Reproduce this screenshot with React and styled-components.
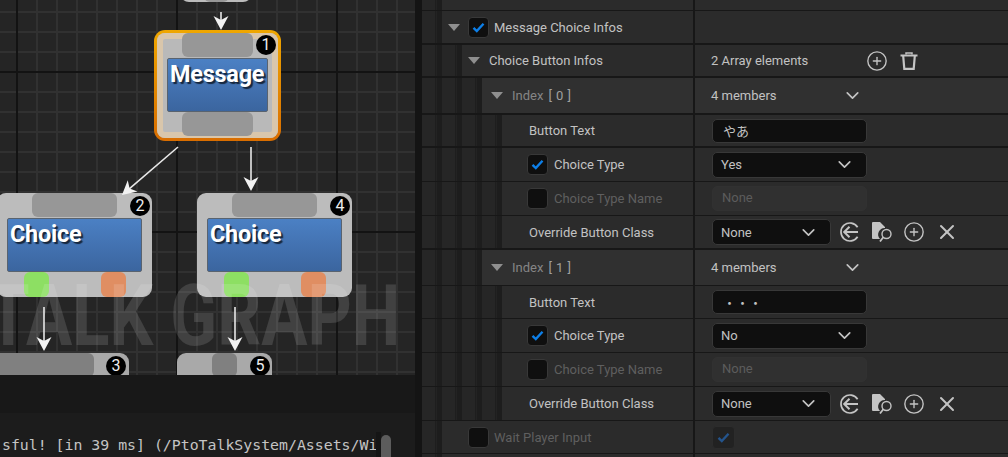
import React from 'react'
import styled, { createGlobalStyle } from 'styled-components'
import { ChevronDown, CirclePlus, X } from 'lucide-react'

const GlobalStyle = createGlobalStyle`
    html, body { margin: 0; padding: 0; background: #161616; overflow: hidden; }
    body { font-family: Roboto, "Noto Sans CJK JP", sans-serif; }
`

const Page = styled.div`
    display: flex;
    width: 1008px;
    height: 457px;
    overflow: hidden;
`

/* left side: graph + console */
const LeftColumn = styled.div`
    display: flex;
    flex-direction: column;
    width: 415px;
    flex: none;
`

const Canvas = styled.div`
    position: relative;
    height: 375px;
    flex: none;
    overflow: hidden;
    background-color: #252525;
    background-image:
        linear-gradient(to right, #131313 0 2px, transparent 2px),
        linear-gradient(to bottom, #131313 0 2px, transparent 2px),
        linear-gradient(to right, #313131 0 2px, transparent 2px),
        linear-gradient(to bottom, #313131 0 2px, transparent 2px);
    background-size: 160px 160px, 160px 160px, 20px 20px, 20px 20px;
    background-position: 16px 0, 0 71px, 16px 0, 0 11px;
`

const Node = styled.div`
    position: absolute;
    left: ${p => p.$x}px;
    top: ${p => p.$y}px;
    width: ${p => p.$w}px;
    height: ${p => p.$h}px;
    box-sizing: border-box;
    border-radius: 9px;
    background: ${p => p.$bg || '#bcbcbc'};
    display: flex;
    flex-direction: column;
    align-items: ${p => p.$align || 'center'};
    justify-content: ${p => p.$justify || 'flex-start'};
`

const SelectedNode = styled(Node)`
    padding: 3px;
    border-radius: 11px;
    background: linear-gradient(to bottom, #efa700, #d96d00);
`

const SelectedInner = styled.div`
    flex: 1;
    width: 100%;
    box-sizing: border-box;
    border-radius: 8px;
    background: #b9b9b9;
    box-shadow: inset 0 0 0 6px #d9c6ab;
    display: flex;
    flex-direction: column;
    align-items: center;
`

const Pin = styled.div`
    flex: none;
    width: ${p => p.$w}px;
    height: ${p => p.$h}px;
    margin-left: ${p => p.$ml || 0}px;
    border-radius: 6px;
    background: ${p => p.$color || '#979797'};
`

const BlueBox = styled.div`
    flex: none;
    width: ${p => p.$w}px;
    height: 54px;
    margin-top: 1px;
    box-sizing: border-box;
    border: 1px solid #59636f;
    border-radius: 2px;
    background: linear-gradient(to bottom, #4b80c4, #3b659f);
    padding: 0 0 0 2px;
    color: #fff;
    font-weight: 700;
    font-size: 23.4px;
    line-height: 30px;
    letter-spacing: -0.2px;
    text-shadow: 2px 2px 1px #16263c;
`

const PinRow = styled.div`
    flex: none;
    width: 102px;
    display: flex;
    justify-content: space-between;
`

const Badge = styled.div`
    position: absolute;
    top: ${p => p.$t}px;
    right: ${p => p.$r}px;
    width: 20px;
    height: 20px;
    border-radius: 50%;
    background: #000;
    color: #eee;
    font-size: 16px;
    line-height: 20px;
    text-align: center;
`

const Watermark = styled.div`
    position: absolute;
    left: -13px;
    top: 266px;
    font-weight: 700;
    font-size: 86px;
    line-height: 100px;
    white-space: nowrap;
    color: rgba(255, 255, 255, 0.13);
    transform: scaleX(0.8);
    transform-origin: left top;
    pointer-events: none;
`

const ArrowLayer = styled.svg`
    position: absolute;
    left: 0;
    top: 0;
    pointer-events: none;
`

const ArrowGap = styled.div`
    height: 38px;
    flex: none;
    background: #181818;
`

const Console = styled.div`
    position: relative;
    flex: 1;
    overflow: hidden;
    background: #1c1c1c;
    padding: 23px 0 0 2px;
`

const ConsoleText = styled.div`
    width: 374px;
    overflow: hidden;
    white-space: nowrap;
    font-family: "DejaVu Sans Mono", monospace;
    font-size: 14.85px;
    line-height: 18px;
    color: #c4c4c4;
`

const ScrollTrack = styled.div`
    position: absolute;
    left: 376px;
    top: 19px;
    width: 5px;
    height: 30px;
    background: #151515;
`

const ScrollThumb = styled.div`
    position: absolute;
    left: 381px;
    top: 22px;
    width: 10px;
    height: 40px;
    border-radius: 5px;
    background: #5c5c5c;
`

/* right side: details panel */
const Splitter = styled.div`
    width: 7px;
    flex: none;
    background: #141414;
`

const Panel = styled.div`
    flex: 1;
    min-width: 0;
    display: flex;
    flex-direction: column;
    background: #171717;
    color: #c2c2c2;
    font-size: 13px;
    overflow: hidden;
`

const Row = styled.div`
    display: flex;
    flex: none;
    height: ${p => p.$h}px;
    margin-bottom: ${p => p.$gap ?? 1}px;
`

const Gutter = styled.div`
    width: 20px;
    flex: none;
    background: linear-gradient(to right, #262626 0 13px, #1e1e1e 13px 14px, #232323 14px 15px, #1d1d1d 15px 20px);
`

const Label = styled.div`
    width: ${p => 271 - p.$depth * 20}px;
    flex: none;
    box-sizing: border-box;
    display: flex;
    align-items: center;
    padding-left: ${p => p.$pl || 0}px;
    gap: ${p => p.$gap || 0}px;
    background: ${p => p.$bg || '#2b2b2b'};
    color: ${p => p.$dim ? '#5f5f5f' : p.$muted ? '#858585' : '#c2c2c2'};
`

const IndexNum = styled.span`
    color: #a0a0a0;
    margin-left: 5px;
    word-spacing: 1px;
`

const Value = styled.div`
    flex: 1;
    margin-left: 2px;
    display: flex;
    align-items: center;
    padding-left: 17px;
    background: ${p => p.$bg || '#2b2b2b'};
`

const ValueText = styled.div`
    width: ${p => p.$w}px;
    margin-left: -1px;
    flex: none;
    white-space: nowrap;
`

const Triangle = styled.span`
    flex: none;
    width: 0;
    height: 0;
    margin-right: ${p => p.$mr || 0}px;
    border-left: 6px solid transparent;
    border-right: 6px solid transparent;
    border-top: 7px solid #8f8f8f;
`

const CheckBox = styled.span`
    flex: none;
    width: 19px;
    height: 19px;
    display: flex;
    align-items: center;
    justify-content: center;
    border: 1px solid #383838;
    border-radius: 4px;
    background: #0f0f0f;
`

const LockedCheckBox = styled(CheckBox)`
    width: 21px;
    height: 21px;
    background: #222;
    border-color: #2c2c2c;
`

const Field = styled.div`
    box-sizing: border-box;
    width: ${p => p.$w}px;
    height: ${p => p.$h}px;
    flex: none;
    display: flex;
    align-items: center;
    justify-content: space-between;
    padding: 0 ${p => p.$pr ?? 11}px 0 ${p => p.$pl ?? 8}px;
    border: 1px solid #383838;
    border-radius: 5px;
    background: #0f0f0f;
    color: #c2c2c2;
`

const DisabledField = styled(Field)`
    border-color: #313131;
    background: #303030;
    color: #5c5c5c;
    padding-bottom: 2px;
`

const IconGroup = styled.div`
    display: flex;
    align-items: center;
    gap: ${p => p.$gap}px;
    margin-left: ${p => p.$ml}px;
    color: #c4c4c4;
`

const CheckMark = ({ dim }) => (
    <svg width="13" height="11" viewBox="0 0 13 11" fill="none">
        <path d="M1.5 5.8 L4.8 9 L11.5 1.8" stroke={dim ? '#24548c' : '#0d7fe8'} strokeWidth="2.4" />
    </svg>
)

const BackIcon = () => (
    <svg width="23" height="20" viewBox="0 0 23 20" fill="none" stroke="#c4c4c4" strokeWidth="1.7">
        <path d="M18.6 5.2 A9 9 0 1 0 18.6 14.8" />
        <path d="M10.5 4.8 L5.2 10 L10.5 15.2" strokeWidth="2" />
        <path d="M5.5 10 H19" strokeWidth="2" />
    </svg>
)

const BrowseIcon = () => (
    <svg width="21" height="20" viewBox="0 0 21 20" fill="none">
        <path d="M0 1 Q0 0 1 0 H8 L13 5 V6 A6.5 6.5 0 0 0 8 17 H1 Q0 17 0 16 Z" fill="#c4c4c4" />
        <circle cx="14.5" cy="12" r="4.5" stroke="#c4c4c4" strokeWidth="1.4" />
        <path d="M11.3 15.3 L8 19.5" stroke="#c4c4c4" strokeWidth="1.8" />
    </svg>
)

const TrashIcon = () => (
    <svg width="18" height="18" viewBox="0 0 18 18" fill="none" stroke="#c4c4c4">
        <path d="M0.5 3.5 H17.5" strokeWidth="2" />
        <path d="M6 2.5 V0.9 H12 V2.5" strokeWidth="1.5" />
        <path d="M3.2 4 L4.3 16.8 H13.7 L14.8 4" strokeWidth="2.2" />
    </svg>
)

const Arrow = ({ x1, y1, x2, y2 }) => {
    const a = Math.atan2(y2 - y1, x2 - x1)
    const pt = (back, side) => [
        x2 - back * Math.cos(a) - side * Math.sin(a),
        y2 - back * Math.sin(a) + side * Math.cos(a),
    ].join(',')
    return (
        <g>
            <line x1={x1} y1={y1} x2={x2 - 8 * Math.cos(a)} y2={y2 - 8 * Math.sin(a)} stroke="#e8e8e8" strokeWidth="1.6" />
            <polygon points={[pt(0, 0), pt(14, 7.5), pt(10, 0), pt(14, -7.5)].join(' ')} fill="#f2f2f2" />
        </g>
    )
}

const Gutters = ({ depth }) => Array.from({ length: depth }, (_, i) => <Gutter key={i} />)

const PropRow = ({ depth, h, gap, labelProps, label, children, bg }) => (
    <Row $h={h} $gap={gap}>
        <Gutters depth={depth} />
        <Label $depth={depth} $bg={bg} {...labelProps}>{label}</Label>
        <Value $bg={bg}>{children}</Value>
    </Row>
)

const Chevron = () => <ChevronDown size={21} strokeWidth={1.9} color="#c4c4c4" />

const ChoiceMembers = ({ index, text, type, indexGap, textH, textGap, lastH }) => (
    <>
        <PropRow depth={3} h={35} gap={indexGap} bg="#303030"
            labelProps={{ $pl: 9, $gap: 9, $muted: true }}
            label={<><Triangle /><span>Index<IndexNum>[ {index} ]</IndexNum></span></>}>
            <ValueText $w={131}>4 members</ValueText>
            <Chevron />
        </PropRow>
        <PropRow depth={4} h={textH} gap={textGap} labelProps={{ $pl: 27 }} label="Button Text">
            <Field $w={155} $h={24} $pl={10}>{text}</Field>
        </PropRow>
        <PropRow depth={4} h={33} labelProps={{ $pl: 25, $gap: 6 }}
            label={<><CheckBox><CheckMark /></CheckBox><span>Choice Type</span></>}>
            <Field $w={155} $h={26}>{type}<Chevron /></Field>
        </PropRow>
        <PropRow depth={4} h={33} labelProps={{ $pl: 25, $gap: 6, $dim: true }}
            label={<><CheckBox /><span>Choice Type Name</span></>}>
            <DisabledField $w={155} $h={25} $pl={9}>None</DisabledField>
        </PropRow>
        <PropRow depth={4} h={lastH} gap={lastH === 32 ? 2 : 1} labelProps={{ $pl: 27 }} label="Override Button Class">
            <Field $w={119} $h={26}>None<Chevron /></Field>
            <IconGroup $gap={10} $ml={8}>
                <BackIcon />
                <BrowseIcon />
                <CirclePlus size={22} strokeWidth={1.5} />
                <X size={24} strokeWidth={2} />
            </IconGroup>
        </PropRow>
    </>
)

export default function App() {
    return (
        <Page>
            <GlobalStyle />
            <LeftColumn>
                <Canvas>
                    <Node $x={180} $y={-30} $w={72} $h={32} $justify="flex-end">
                        <Pin $w={25} $h={24} $color="#979797" />
                    </Node>

                    <SelectedNode $x={154} $y={30} $w={127} $h={111}>
                        <SelectedInner>
                            <Pin $w={71} $h={24} />
                            <BlueBox $w={101}>Message</BlueBox>
                            <Pin $w={71} $h={24} />
                        </SelectedInner>
                        <Badge $t={5} $r={5}>1</Badge>
                    </SelectedNode>

                    <Node $x={-3} $y={193} $w={155} $h={104}>
                        <Pin $w={85} $h={24} $ml={-1} />
                        <BlueBox $w={135}>Choice</BlueBox>
                        <PinRow>
                            <Pin $w={25} $h={25} $color="#8ddf63" />
                            <Pin $w={25} $h={25} $color="#e08e62" />
                        </PinRow>
                        <Badge $t={3} $r={2}>2</Badge>
                    </Node>

                    <Node $x={197} $y={193} $w={155} $h={104}>
                        <Pin $w={85} $h={24} $ml={-1} />
                        <BlueBox $w={135}>Choice</BlueBox>
                        <PinRow>
                            <Pin $w={25} $h={25} $color="#8ddf63" />
                            <Pin $w={25} $h={25} $color="#e08e62" />
                        </PinRow>
                        <Badge $t={3} $r={2}>4</Badge>
                    </Node>

                    <Node $x={-30} $y={353} $w={159} $h={60} $align="flex-start" $bg="#a9a9a9">
                        <Pin $w={124} $h={24} $color="#808080" />
                        <Badge $t={3} $r={3}>3</Badge>
                    </Node>

                    <Node $x={177} $y={353} $w={95} $h={60} $align="flex-start" $bg="#a9a9a9">
                        <Pin $w={25} $h={24} $ml={35} $color="#808080" />
                        <Badge $t={3} $r={2}>5</Badge>
                    </Node>

                    <Watermark>TALK GRAPH</Watermark>

                    <ArrowLayer width="415" height="375">
                        <Arrow x1={221} y1={12} x2={221} y2={30} />
                        <Arrow x1={178} y1={147} x2={122} y2={195} />
                        <Arrow x1={251} y1={147} x2={251} y2={191} />
                        <Arrow x1={44} y1={307} x2={44} y2={351} />
                        <Arrow x1={235} y1={307} x2={235} y2={351} />
                    </ArrowLayer>
                </Canvas>
                <ArrowGap />
                <Console>
                    <ConsoleText>sful! [in 39 ms] (/PtoTalkSystem/Assets/Widgets</ConsoleText>
                    <ScrollTrack />
                    <ScrollThumb />
                </Console>
            </LeftColumn>
            <Splitter />
            <Panel>
                <PropRow depth={1} h={10} label="" />
                <PropRow depth={1} h={32} gap={2}
                    labelProps={{ $pl: 6, $gap: 5 }}
                    label={<><Triangle $mr={3} /><CheckBox><CheckMark /></CheckBox><span>Message Choice Infos</span></>} />
                <PropRow depth={2} h={31} gap={2} labelProps={{ $pl: 6, $gap: 9 }} label={<><Triangle /><span>Choice Button Infos</span></>}>
                    <ValueText $w={155}>2 Array elements</ValueText>
                    <IconGroup $gap={12} $ml={0}>
                        <CirclePlus size={22} strokeWidth={1.5} />
                        <TrashIcon />
                    </IconGroup>
                </PropRow>
                <ChoiceMembers index={0} text="やあ" type="Yes" indexGap={2} textH={31} textGap={2} lastH={32} />
                <ChoiceMembers index={1} text="・・・" type="No" indexGap={1} textH={32} textGap={1} lastH={33} />
                <PropRow depth={1} h={32}
                    labelProps={{ $pl: 26, $gap: 5, $dim: true }}
                    label={<><CheckBox /><span>Wait Player Input</span></>}>
                    <LockedCheckBox><CheckMark dim /></LockedCheckBox>
                </PropRow>
                <PropRow depth={1} h={10} label="" />
            </Panel>
        </Page>
    )
}
